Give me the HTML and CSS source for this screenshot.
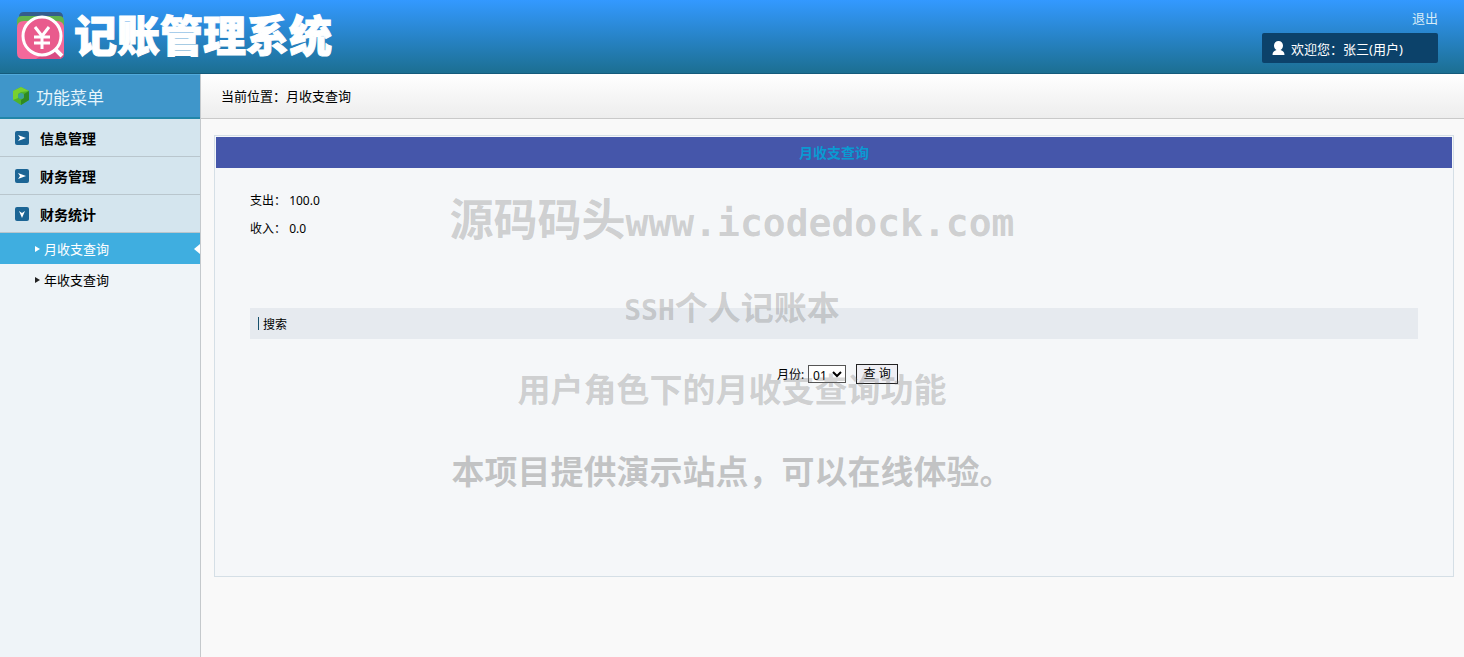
FILE: index.html
```
<!DOCTYPE html>
<html lang="zh-CN">
<head>
  <meta charset="UTF-8" />
  <title>记账管理系统</title>
  <link rel="stylesheet" href="styles.css">
</head>
<body>

  <header class="header">
    <div class="logo">
      <svg class="logo-icon" width="50" height="48" viewBox="0 0 50 48">
        <path d="M3 8 V5 Q3 0 8 0 H42 Q47 0 47 5 V8Z" fill="#345d8c"/>
        <path d="M1 16 V9 Q1 4 6 4 H43 Q48 4 48 9 V16Z" fill="#61b34d"/>
        <path d="M1 16 Q1 9 8 9 H41 Q48 9 48 16 V41 Q48 47 42 47 H7 Q1 47 1 41Z" fill="#f4699b"/>
        <path d="M39 34 L48 43 Q47 47 42 47 H20Z" fill="#d94c83"/>
        <circle cx="26" cy="24" r="19" fill="#e95b8d" stroke="#fff" stroke-width="3"/>
        <path d="M39 37 L46 44" stroke="#fff" stroke-width="4"/>
        <path d="M19 15 L26 24 L33 15 M26 24 V37 M18 25 H34 M18 31 H34" fill="none" stroke="#fff" stroke-width="3"/>
      </svg>
      <span class="logo-text">记账管理系统</span>
    </div>
    <div class="user">
      <a class="logout" href="#">退出</a>
      <div class="welcome">
        <svg width="13" height="15" viewBox="0 0 13 15">
          <path d="M6.500 0 C9 0 11 2 11 4.500 C11 6.500 10 8 8.500 9 C11 10 12.500 11 12.500 14 H.5 C.5 11 2 10 4.500 9 C3 8 2 6.500 2 4.500 C2 2 4 0 6.500 0Z" fill="#fff"/>
        </svg>
        <span>欢迎您：张三(用户)</span>
      </div>
    </div>
  </header>

  <div class="main">
    <nav class="sidebar">
      <div class="menu-title">
        <svg width="18" height="20" viewBox="0 0 18 20">
          <path d="M9 1 L17 5 V14 L9 19 L1 14 V5Z" fill="#4fb32a"/>
          <path d="M9 1 L1 5 V14 L6 12 V8 L9 6 L17 5Z" fill="#78d02f"/>
          <path d="M17 5 V14 L9 19 V14 L12 12 V8Z" fill="#2f8a22"/>
          <circle cx="9" cy="10" r="3" fill="#3da19a"/>
        </svg>
        <span>功能菜单</span>
      </div>
      <a class="menu-item" href="#">
        <svg width="14" height="14" viewBox="0 0 14 14"><rect width="14" height="14" rx="2" fill="#1c6595"/><path d="M3 4 L11 7 L3 10 L5 7Z" fill="#fff"/></svg>
        信息管理
      </a>
      <a class="menu-item" href="#">
        <svg width="14" height="14" viewBox="0 0 14 14"><rect width="14" height="14" rx="2" fill="#1c6595"/><path d="M3 4 L11 7 L3 10 L5 7Z" fill="#fff"/></svg>
        财务管理
      </a>
      <a class="menu-item" href="#">
        <svg width="14" height="14" viewBox="0 0 14 14"><rect width="14" height="14" rx="2" fill="#1c6595"/><path d="M4 4 L7 6 L10 4 L7 11Z" fill="#fff"/></svg>
        财务统计
      </a>
      <a class="sub-item active" href="#">月收支查询</a>
      <a class="sub-item" href="#">年收支查询</a>
    </nav>

    <main class="content">
      <div class="place">当前位置：月收支查询</div>

      <section class="panel">
        <h1 class="panel-title">月收支查询</h1>
        <div class="panel-body">
          <p class="total">支出： <span>100.0</span></p>
          <p class="total">收入： <span>0.0</span></p>
          <div class="search-title">搜索</div>
          <form class="search-form">
            <label for="month">月份:</label>
            <select id="month">
              <option>01</option>
              <option>02</option>
              <option>03</option>
              <option>04</option>
              <option>05</option>
              <option>06</option>
              <option>07</option>
              <option>08</option>
              <option>09</option>
              <option>10</option>
              <option>11</option>
              <option>12</option>
            </select>
            <button type="button">查 询</button>
          </form>
        </div>
      </section>
    </main>
  </div>

  <div class="watermark">
    <p class="mark-site">源码码头<span>www.icodedock.com</span></p>
    <p><span>SSH</span>个人记账本</p>
    <p>用户角色下的月收支查询功能</p>
    <p class="mark-dark">本项目提供演示站点，可以在线体验。</p>
  </div>

</body>
</html>
```

FILE: styles.css
```
* {
  box-sizing: border-box;
}

body {
  margin: 0;
  min-height: 100vh;
  display: flex;
  flex-direction: column;
  position: relative;
  background: #f9f9f9;
  color: #000;
  font-family: "Noto Sans", "Noto Sans CJK SC", sans-serif;
  font-size: 13px;
}

a {
  color: inherit;
  text-decoration: none;
}

p {
  margin: 0;
}

.header {
  height: 74px;
  display: flex;
  justify-content: space-between;
  padding: 0 26px 0 16px;
  background: linear-gradient(#3399ff, #1c6f92);
  border-bottom: 1px solid #155b7c;
  color: #fff;
}

.logo {
  display: flex;
  align-items: flex-start;
  gap: 8px;
}

.logo-icon {
  margin-top: 12px;
}

.logo-text {
  font-family: "Noto Sans CJK SC", sans-serif;
  font-size: 43px;
  font-weight: 900;
  line-height: 66px;
  -webkit-text-stroke: 1px #fff;
}

.user {
  display: flex;
  flex-direction: column;
  align-items: flex-end;
  gap: 5px;
  padding-top: 8px;
}

.logout {
  color: #d8ecf8;
  line-height: 20px;
}

.welcome {
  width: 176px;
  height: 30px;
  display: flex;
  align-items: center;
  gap: 6px;
  padding-left: 10px;
  background: #0c426a;
  border-radius: 2px;
}

.main {
  flex: 1;
  display: flex;
}

.sidebar {
  width: 201px;
  flex-shrink: 0;
  background: #eff4f8;
  border-right: 1px solid #c5c9cc;
}

.menu-title {
  height: 45px;
  display: flex;
  align-items: center;
  gap: 6px;
  padding-left: 12px;
  background: #3f96ca;
  border-top: 1px solid #51aadb;
  border-bottom: 2px solid #2186a8;
  color: #e6f5fc;
  font-size: 17px;
}

.menu-item {
  height: 38px;
  display: flex;
  align-items: center;
  gap: 11px;
  padding-left: 15px;
  background: #d4e5ee;
  border-bottom: 1px solid #b9c6cd;
  font-size: 14px;
  font-weight: bold;
}

.sub-item {
  height: 31px;
  display: flex;
  align-items: center;
  gap: 4px;
  padding-left: 35px;
  position: relative;
}

.sub-item::before {
  content: "";
  border: 3px solid transparent;
  border-left: 5px solid #222;
  border-right: 0;
}

.active {
  background: #3faee0;
  color: #fff;
}

.active::before {
  border-left-color: #fff;
}

.active::after {
  content: "";
  position: absolute;
  right: 0;
  border: 5px solid transparent;
  border-right: 6px solid #fff;
  border-left: 0;
}

.content {
  flex: 1;
}

.place {
  height: 45px;
  padding-left: 20px;
  line-height: 45px;
  background: linear-gradient(#fff, #ededed);
  border-bottom: 1px solid #c9c9c9;
}

.panel {
  min-height: 442px;
  margin: 16px 10px 0 13px;
  padding: 1px;
  background: #f5f7f9;
  border: 1px solid #d5dfe6;
}

.panel-title {
  margin: 0;
  background: #4556aa;
  color: #0a9ad2;
  font-size: 14px;
  line-height: 31px;
  text-align: center;
}

.panel-body {
  padding: 19px 34px;
  font-size: 12px;
}

.total {
  line-height: 28px;
}

.search-title {
  display: flex;
  align-items: center;
  gap: 4px;
  height: 31px;
  margin-top: 65px;
  padding-left: 8px;
  background: #e6eaef;
}

.search-title::before {
  content: "";
  height: 13px;
  border-left: 1px solid #16506c;
}

.search-form {
  display: flex;
  align-items: center;
  justify-content: center;
  margin-top: 25px;
  padding-left: 7px;
}

.search-form select {
  width: 38px;
  height: 18px;
  margin: 0 10px 0 4px;
  padding: 0;
  background: #fff;
  border: 1px solid #555;
  border-radius: 0;
  font: inherit;
}

.search-form button {
  width: 42px;
  height: 20px;
  padding: 0;
  background: #efeff4;
  border: 1px solid #222;
  border-radius: 0;
  font: inherit;
  line-height: 18px;
}

/* overlay text, centered on the whole page */
.watermark {
  position: absolute;
  top: 176px;
  left: 0;
  right: 0;
  color: rgba(110, 110, 110, 0.3);
  font-family: "Noto Sans CJK SC", sans-serif;
  font-size: 33px;
  font-weight: bold;
  line-height: 82px;
  text-align: center;
  pointer-events: none;
}

.watermark span {
  font-family: "DejaVu Sans Mono", monospace;
  font-size: 28px;
  line-height: 1;
}

.watermark .mark-site {
  margin-bottom: 7px;
  font-size: 44px;
}

.watermark .mark-site span {
  font-size: 38px;
}

.watermark .mark-dark {
  color: rgba(110, 110, 110, 0.38);
}
```
